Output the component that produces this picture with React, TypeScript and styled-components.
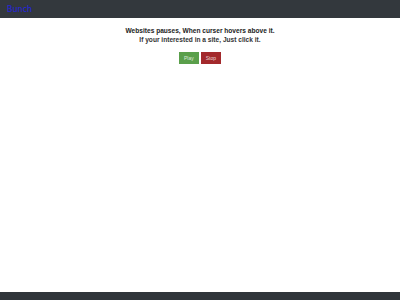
import styled, { createGlobalStyle } from 'styled-components';

const GlobalStyle = createGlobalStyle`
  html, body {
    margin: 0;
    padding: 0;
    background: #ffffff;
  }
  body {
    font-family: "Liberation Sans", Arial, sans-serif;
  }
`;

const Page = styled.div`
  width: 400px;
  height: 300px;
  display: flex;
  flex-direction: column;
`;

const Header = styled.header`
  height: 18px;
  background-color: #33383d;
  display: flex;
  align-items: center;
  padding: 0 7px;
  box-sizing: border-box;
  flex-shrink: 0;
`;

const Brand = styled.a`
  color: #2323e0;
  font-family: "DejaVu Sans", sans-serif;
  font-size: 8px;
  text-decoration: none;
`;

const Main = styled.main`
  flex-grow: 1;
  display: flex;
  flex-direction: column;
  align-items: center;
  padding-top: 8px;
`;

const Line = styled.div`
  font-size: 6.6px;
  font-weight: bold;
  color: #222;
  line-height: 9px;
`;

const Sub = styled(Line)`
  color: #333;
`;

const Buttons = styled.div`
  display: flex;
  gap: 2px;
  margin-top: 8px;
`;

const Button = styled.button<{ $color: string }>`
  background-color: ${({ $color }) => $color};
  border: none;
  color: rgba(255, 255, 255, 0.8);
  font-family: "Liberation Sans", Arial, sans-serif;
  font-size: 5px;
  height: 12px;
  padding: 0 5px;
  cursor: pointer;
`;

const Footer = styled.footer`
  height: 8px;
  background-color: #30353a;
  flex-shrink: 0;
`;

export default function App() {
  return (
    <Page>
      <GlobalStyle />
      <Header>
        <Brand href="#">Bunch</Brand>
      </Header>
      <Main>
        <Line>Websites pauses, When curser hovers above it.</Line>
        <Sub>If your interested in a site, Just click it.</Sub>
        <Buttons>
          <Button $color="#5a9f4b">Play</Button>
          <Button $color="#a3292c">Stop</Button>
        </Buttons>
      </Main>
      <Footer />
    </Page>
  );
}
